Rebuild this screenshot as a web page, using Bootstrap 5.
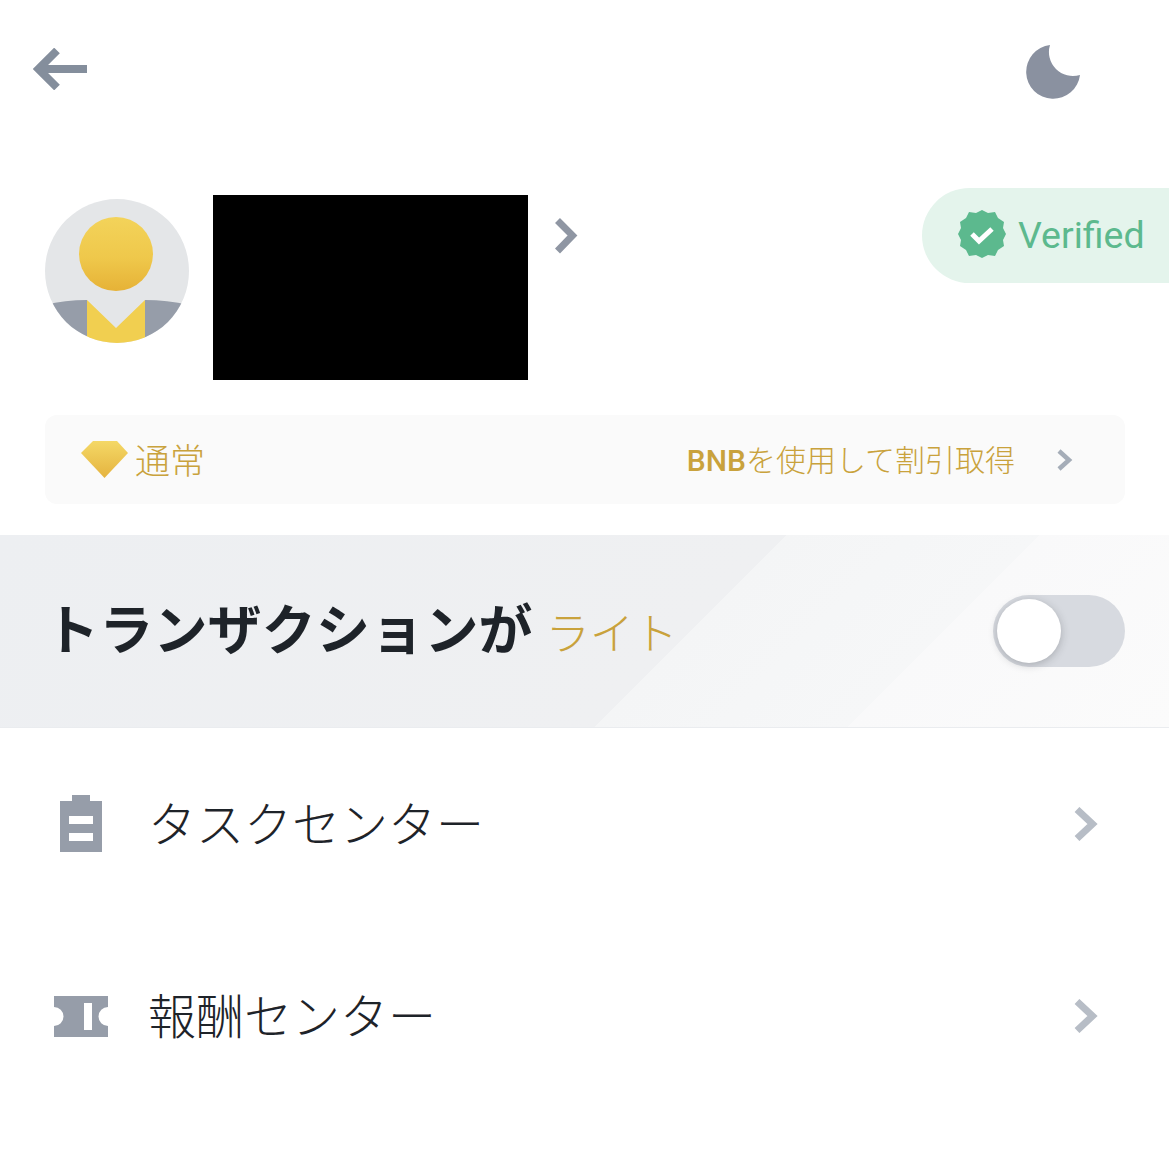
<!DOCTYPE html>
<html lang="ja">
<head>
<meta charset="utf-8">
<title>Account</title>
<link href="https://cdn.jsdelivr.net/npm/bootstrap@5.3.0/dist/css/bootstrap.min.css" rel="stylesheet">
<style>
body{background:#fff;font-family:"Noto Sans CJK JP","Liberation Sans",sans-serif;color:#1e2329;overflow:hidden}
svg{display:block;flex:none}
.screen{width:1169px;height:1170px;overflow:hidden}
.top-bar{height:188px;padding:44px 87px 0 33px}
.back-ic{margin-top:4px}
.profile-row{height:227px;padding-left:45px}
.avatar-ic{margin-top:11px}
.redact{width:315px;height:185px;background:#000;margin:7px 0 0 24px}
.name-chev{margin:30px 0 0 27px}
.verified-pill{width:247px;height:95px;background:#e4f4ec;border-radius:47.5px 0 0 47.5px;padding-left:36px;gap:12px;color:#5cb98e;font:400 37.500px/1 Roboto,"Liberation Sans",sans-serif}
.verified-ic{margin-bottom:3px}
.vip-bar{margin:0 44px 31px 45px;height:89px;background:#fafafa;border-radius:12px;padding:0 52px 0 36px;color:#c9a23c}
.vip-name{font-size:35px;line-height:1;margin-left:6px;padding-bottom:2px;font-weight:300}
.vip-hint{font-size:30px;line-height:1;margin-right:42px;font-weight:300}
.vip-hint b{font:500 30px/1 Roboto,"Liberation Sans",sans-serif}
.trade-banner{height:193px;padding:0 44px 0 45px;border-bottom:1px solid #eaecef;background:linear-gradient(135deg,#edeff2 0,#eff0f2 556px,#f4f5f6 556px,#f6f7f8 735px,#f9f9fa 735px,#fbfbfb 100%)}
.trade-title{font-size:54px;font-weight:700;line-height:1;letter-spacing:.2px;white-space:nowrap;padding-bottom:8px}
.trade-mode{font-size:44px;font-weight:300;color:#c9a23c;margin-left:13px;letter-spacing:0}
.switch-track{width:132px;height:72px;border-radius:36px;background:#d7dae0;padding:4px}
.switch-knob{width:64px;height:64px;border-radius:50%;background:#fff;box-shadow:0 2px 8px rgba(30,35,41,.25)}
.menu-item{height:192px;padding:0 71px 0 54px;border:0;color:#1e2329}
.menu-icon{width:94px}
.menu-label{font-size:48px;font-weight:300;line-height:1;white-space:nowrap;padding-bottom:7px}
</style>
</head>
<body>
<main class="screen d-flex flex-column">
  <header class="top-bar d-flex justify-content-between align-items-start">
    <svg class="back-ic" width="55" height="42" viewBox="0 0 55 42" fill="none" stroke="#848e9c" stroke-width="8"><path d="M54 21H6M24 2.500 5.500 21 24 39.500"/></svg>
    <svg width="56" height="56" viewBox="0 0 56 56"><path fill="#8a91a0" d="M24 1A27 27 0 1 0 54 31 24 24 0 0 1 24 1Z"/></svg>
  </header>

  <section class="profile-row d-flex align-items-start">
    <svg class="avatar-ic" width="144" height="144" viewBox="0 0 144 144">
      <defs>
        <clipPath id="avaClip"><circle cx="72" cy="72" r="72"/></clipPath>
        <linearGradient id="headGrad" x1="0" y1="0" x2="0" y2="1"><stop offset="0" stop-color="#f3d35a"/><stop offset=".55" stop-color="#efc84b"/><stop offset="1" stop-color="#e6b237"/></linearGradient>
      </defs>
      <g clip-path="url(#avaClip)">
        <rect width="144" height="144" fill="#e4e6e8"/>
        <path fill="#969da9" d="M0 106Q20 101 42 101V144H0ZM100 101Q122 101 144 106V144H100Z"/>
        <path fill="#f1cf50" d="M42 101 71 129 100 101v43H42Z"/>
      </g>
      <circle cx="71" cy="55" r="37" fill="url(#headGrad)"/>
    </svg>
    <div class="redact"></div>
    <svg class="name-chev" width="24" height="36" viewBox="0 0 24 36" fill="none" stroke="#8f96a3" stroke-width="7"><path d="M2.500 2.500 17.500 17.500 2.500 33"/></svg>
    <div class="verified-pill ms-auto d-flex align-items-center">
      <svg class="verified-ic" width="48" height="48" viewBox="0 0 48 48">
        <path fill="#5cb98e" d="M24 0l6 3 7-1 3 6 6 4-1 6 3 6-3 6 1 6-6 4-3 6-7-1-6 3-6-3-7 1-3-6-6-4 1-6-3-6 3-6-1-6 6-4 3-6 7 1Z"/>
        <path fill="none" stroke="#fff" stroke-width="5" d="M14 24l7 7 13-12"/>
      </svg>
      <span>Verified</span>
    </div>
  </section>

  <section class="vip-bar d-flex align-items-center">
    <svg width="48" height="38" viewBox="0 0 48 38">
      <defs><linearGradient id="gemGrad" x1="0" y1="0" x2="0" y2="1"><stop offset="0" stop-color="#f4d866"/><stop offset="1" stop-color="#e5b33f"/></linearGradient></defs>
      <path fill="url(#gemGrad)" d="M12 0H36L47 12 23.500 37 0 12Z"/>
    </svg>
    <span class="vip-name">通常</span>
    <span class="vip-hint ms-auto"><b>BNB</b>を使用して割引取得</span>
    <svg width="16" height="22" viewBox="0 0 16 22" fill="none" stroke="#a5adb8" stroke-width="4.500"><path d="M2 2 12 11 2 20"/></svg>
  </section>

  <section class="trade-banner d-flex align-items-center justify-content-between">
    <h1 class="trade-title m-0">トランザクションが<span class="trade-mode">ライト</span></h1>
    <div class="switch-track"><div class="switch-knob"></div></div>
  </section>

  <div class="list-group list-group-flush">
    <a class="list-group-item menu-item d-flex align-items-center" href="#">
      <span class="menu-icon d-block">
        <svg width="48" height="58" viewBox="0 0 48 58"><path fill="#969da9" fill-rule="evenodd" d="M18 0H36V6H48V57H6V6H18ZM15 21V29H39V21ZM15 38V46H39V38Z"/></svg>
      </span>
      <span class="menu-label">タスクセンター</span>
      <svg class="ms-auto" width="24" height="34" viewBox="0 0 24 34" fill="none" stroke="#b7bdc6" stroke-width="7"><path d="M3 2.500 18.500 17 3 31.500"/></svg>
    </a>
    <a class="list-group-item menu-item d-flex align-items-center" href="#">
      <span class="menu-icon d-block">
        <svg width="54" height="41" viewBox="0 0 54 41"><path fill="#969da9" fill-rule="evenodd" d="M0 0H54V11A9.500 9.500 0 0 0 54 30V41H0V30A9.500 9.500 0 0 0 0 11ZM30 7V34H38V7Z"/></svg>
      </span>
      <span class="menu-label">報酬センター</span>
      <svg class="ms-auto" width="24" height="34" viewBox="0 0 24 34" fill="none" stroke="#b7bdc6" stroke-width="7"><path d="M3 2.500 18.500 17 3 31.500"/></svg>
    </a>
  </div>
</main>
<script src="https://cdn.jsdelivr.net/npm/bootstrap@5.3.0/dist/js/bootstrap.bundle.min.js"></script>
</body>
</html>
